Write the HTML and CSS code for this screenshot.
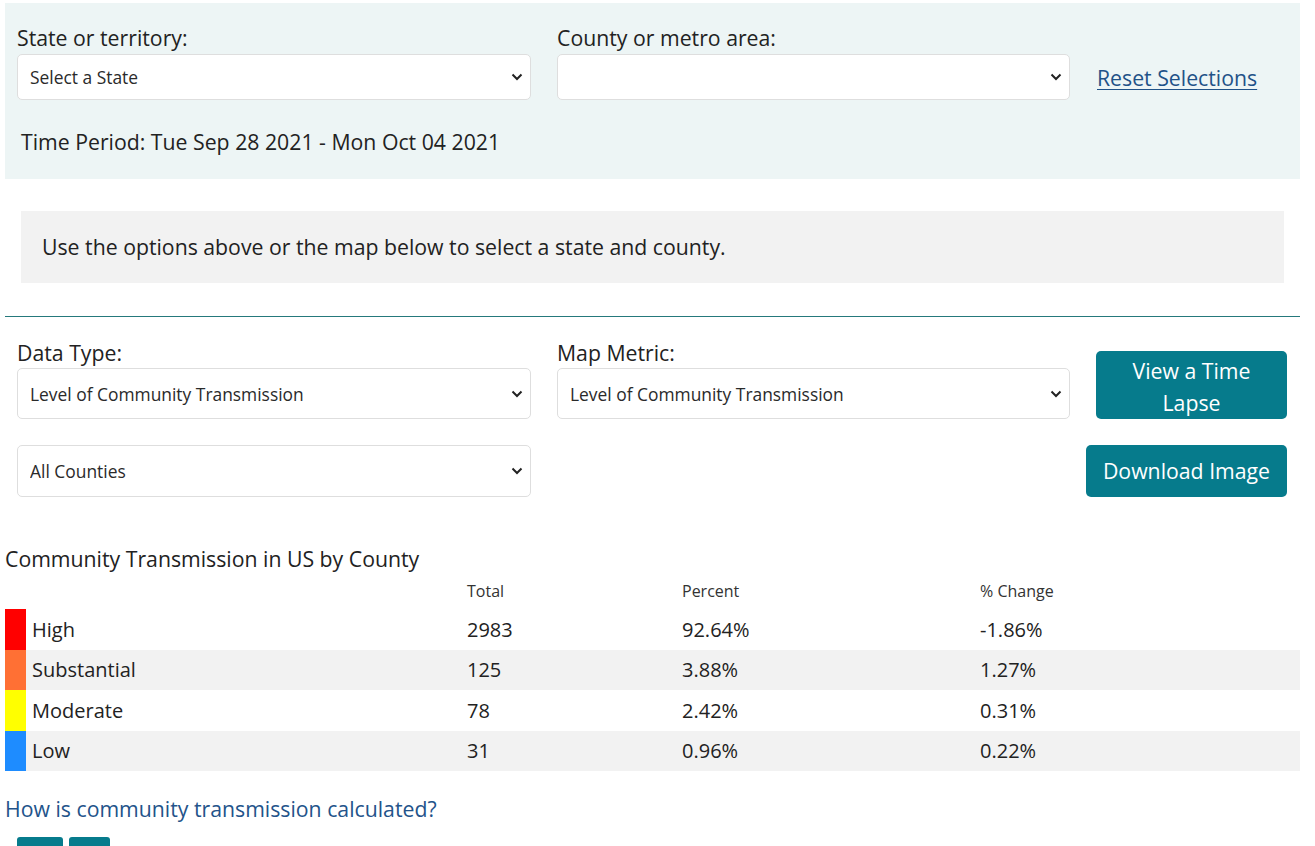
FILE: index.html
```html
<!DOCTYPE html>
<html lang="en">
<head>
<meta charset="utf-8">
<title>Community Transmission</title>
<link rel="stylesheet" href="styles.css">
</head>
<body>
<div class="page">
  <section class="filters">
    <div class="filter-grid">
      <div class="field">
        <label class="field-label" for="state">State or territory:</label>
        <div class="select-wrap">
          <select id="state" class="select select-sm"><option>Select a State</option></select>
          <svg class="chev" width="12" height="8" viewBox="0 0 12 8"><path d="M1.5 1.5 L6 6 L10.5 1.5" fill="none" stroke="#222" stroke-width="2"/></svg>
        </div>
      </div>
      <div class="field">
        <label class="field-label" for="county">County or metro area:</label>
        <div class="select-wrap">
          <select id="county" class="select select-sm"><option></option></select>
          <svg class="chev" width="12" height="8" viewBox="0 0 12 8"><path d="M1.5 1.5 L6 6 L10.5 1.5" fill="none" stroke="#222" stroke-width="2"/></svg>
        </div>
      </div>
      <div class="reset-cell">
        <a class="reset" href="#">Reset Selections</a>
      </div>
    </div>
    <p class="period">Time Period: Tue Sep 28 2021 - Mon Oct 04 2021</p>
  </section>

  <div class="notice">Use the options above or the map below to select a state and county.</div>

  <hr class="rule">

  <section class="data-grid">
    <div class="field">
      <label class="field-label" for="dtype">Data Type:</label>
      <div class="select-wrap">
        <select id="dtype" class="select select-lg"><option>Level of Community Transmission</option></select>
        <svg class="chev" width="12" height="8" viewBox="0 0 12 8"><path d="M1.5 1.5 L6 6 L10.5 1.5" fill="none" stroke="#222" stroke-width="2"/></svg>
      </div>
    </div>
    <div class="field">
      <label class="field-label" for="metric">Map Metric:</label>
      <div class="select-wrap">
        <select id="metric" class="select select-lg"><option>Level of Community Transmission</option></select>
        <svg class="chev" width="12" height="8" viewBox="0 0 12 8"><path d="M1.5 1.5 L6 6 L10.5 1.5" fill="none" stroke="#222" stroke-width="2"/></svg>
      </div>
    </div>
    <div class="btn-cell">
      <button class="btn btn-lapse">View a Time Lapse</button>
    </div>
    <div class="select-wrap">
      <select class="select select-lg2"><option>All Counties</option></select>
      <svg class="chev" width="12" height="8" viewBox="0 0 12 8"><path d="M1.5 1.5 L6 6 L10.5 1.5" fill="none" stroke="#222" stroke-width="2"/></svg>
    </div>
    <div></div>
    <div class="btn-cell">
      <button class="btn btn-download">Download Image</button>
    </div>
  </section>

  <h2 class="table-title">Community Transmission in US by County</h2>
  <table class="ct-table">
    <colgroup>
      <col class="c-sw"><col class="c-label"><col class="c-total"><col class="c-pct"><col>
    </colgroup>
    <thead>
      <tr><th></th><th></th><th>Total</th><th>Percent</th><th>% Change</th></tr>
    </thead>
    <tbody>
      <tr><td class="sw sw-high"></td><td class="lbl">High</td><td>2983</td><td>92.64%</td><td>-1.86%</td></tr>
      <tr class="alt"><td class="sw sw-sub"></td><td class="lbl">Substantial</td><td>125</td><td>3.88%</td><td>1.27%</td></tr>
      <tr><td class="sw sw-mod"></td><td class="lbl">Moderate</td><td>78</td><td>2.42%</td><td>0.31%</td></tr>
      <tr class="alt"><td class="sw sw-low"></td><td class="lbl">Low</td><td>31</td><td>0.96%</td><td>0.22%</td></tr>
    </tbody>
  </table>

  <a class="how" href="#">How is community transmission calculated?</a>

  <div class="mini-btns">
    <span class="mini mini-a"></span>
    <span class="mini mini-b"></span>
  </div>
</div>
</body>
</html>
```
FILE: styles.css
```css
* { box-sizing: border-box; }
html, body { margin: 0; padding: 0; background: #fff; }
body {
  font-family: "Open Sans", "Liberation Sans", sans-serif;
  color: #222;
  overflow: hidden;
}
.page {
  margin: 3px 15px 0 5px;
}

/* top filters */
.filters {
  background: #edf5f5;
  padding: 23px 13px 23px 12px;
}
.filter-grid {
  display: grid;
  grid-template-columns: 514px 513px 1fr;
  column-gap: 26px;
}
.field { display: flex; flex-direction: column; }
.field-label {
  font-size: 21.25px;
  line-height: 24px;
  margin-bottom: 4px;
  color: #222;
}
.select-wrap { position: relative; }
.select {
  -webkit-appearance: none;
  appearance: none;
  width: 100%;
  display: block;
  background: #fff;
  border: 1px solid #dedede;
  border-radius: 5px;
  font-family: "Open Sans", "Liberation Sans", sans-serif;
  font-size: 17.4px;
  color: #2a2a2a;
  padding: 0 36px 0 12px;
  outline: none;
}
.select-sm { height: 46px; }
.select-lg { height: 51px; }
.select-lg2 { height: 52px; }
.chev {
  position: absolute;
  right: 8px;
  top: 50%;
  margin-top: -4px;
  pointer-events: none;
}
.reset-cell {
  align-self: end;
  height: 46px;
  display: flex;
  align-items: center;
  padding-left: 1px;
}
.reset {
  font-size: 21.25px;
  color: #1f5288;
  text-decoration: underline;
  text-underline-offset: 3px;
  text-decoration-thickness: 1px;
}
.period {
  margin: 28px 0 0 4px;
  font-size: 21.25px;
  line-height: 28px;
}

/* notice */
.notice {
  margin: 32px 16px 0;
  background: #f2f2f2;
  padding: 22px 21px;
  font-size: 21.25px;
  line-height: 28px;
}
.rule {
  margin: 33px 0 0;
  border: 0;
  border-top: 1px solid #25797c;
  height: 0;
}

/* data controls */
.data-grid {
  display: grid;
  grid-template-columns: 514px 513px 1fr;
  column-gap: 26px;
  row-gap: 26px;
  padding: 24px 13px 0 12px;
}
.data-grid .field-label { margin-bottom: 3px; }
.btn-cell {
  display: flex;
  justify-content: flex-end;
  align-items: flex-end;
  min-width: 0;
}
.btn {
  background: #067b8c;
  color: #fff;
  border: 0;
  border-radius: 5px;
  font-family: "Open Sans", "Liberation Sans", sans-serif;
  font-size: 21.25px;
  flex-shrink: 0;
}
.btn-lapse {
  width: 191px;
  height: 68px;
  line-height: 32px;
  padding: 4px 16px 0;
}
.btn-download {
  width: 201px;
  height: 52px;
  line-height: 28px;
  padding: 0 8px;
}

/* table */
.table-title {
  margin: 48px 0 0;
  font-size: 21.25px;
  line-height: 28px;
  font-weight: 400;
  color: #222;
}
.ct-table {
  width: 100%;
  border-collapse: collapse;
  table-layout: fixed;
}
.c-sw { width: 21px; }
.c-label { width: 441px; }
.c-total { width: 215px; }
.c-pct { width: 298px; }
.ct-table th {
  height: 36px;
  text-align: left;
  font-weight: 400;
  font-size: 16px;
  color: #333;
  padding: 0;
  vertical-align: middle;
}
.ct-table td {
  height: 40.5px;
  padding: 0;
  font-size: 20px;
  color: #222;
  vertical-align: middle;
}
.ct-table td.lbl { padding-left: 6px; }
.ct-table tr.alt td { background: #f2f2f2; }
.ct-table td.sw-high { background: #ff0000; }
.ct-table td.sw-sub { background: #ff7034; }
.ct-table tr.alt td.sw-sub { background: #ff7034; }
.ct-table td.sw-mod { background: #ffff00; }
.ct-table td.sw-low { background: #1e8cff; }
.ct-table tr.alt td.sw-low { background: #1e8cff; }

.how {
  display: block;
  margin-top: 24px;
  font-size: 21.25px;
  line-height: 28px;
  color: #23538a;
  text-decoration: none;
}
.mini-btns {
  display: flex;
  gap: 6px;
  margin: 14px 0 0 12px;
}
.mini {
  display: block;
  height: 40px;
  background: #067b8c;
  border-radius: 3px 3px 0 0;
}
.mini-a { width: 46px; }
.mini-b { width: 41px; }
```
